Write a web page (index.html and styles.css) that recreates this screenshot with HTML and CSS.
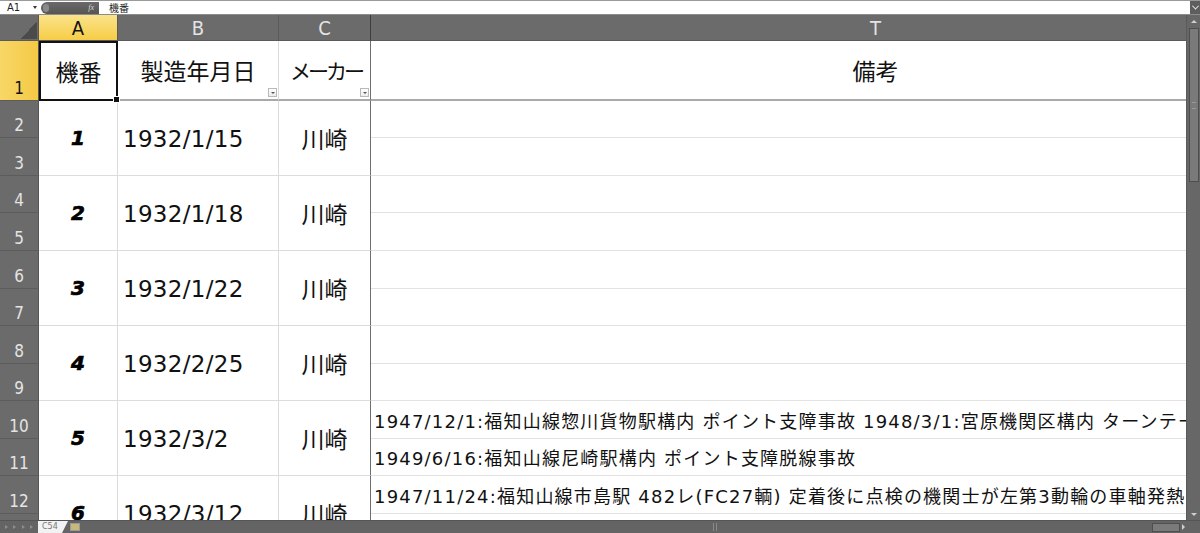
FILE: index.html
```html
<!DOCTYPE html>
<html lang="ja">
<head>
<meta charset="utf-8">
<title>C54</title>
<link rel="stylesheet" href="styles.css">
</head>
<body>
<div class="app">
  <div class="formula-bar">
    <div class="namebox"><span class="name">A1</span><span class="nb-arrow"></span></div>
    <div class="fx-box"><span class="fx-knob"></span><span class="fx">fx</span></div>
    <div class="formula">機番</div>
    <div class="expand"><span></span></div>
  </div>
  <div class="main">
    <div class="sheet">
      <div class="grid">
        <div class="corner"></div>
        <div class="ch sel">A</div>
        <div class="ch">B</div>
        <div class="ch colc">C</div>
        <div class="ch">T</div>

        <div class="rh sel">1</div>
        <div class="c hdr a1">機番</div>
        <div class="c hdr">製造年月日<span class="fbtn"></span></div>
        <div class="c hdr colc maker-h">メーカー<span class="fbtn"></span></div>
        <div class="c hdr">備考</div>

        <div class="rh">2</div>
        <div class="c num span2">1</div>
        <div class="c date span2">1932/1/15</div>
        <div class="c maker colc span2">川崎</div>
        <div class="c note"></div>
        <div class="rh">3</div>
        <div class="c note"></div>

        <div class="rh">4</div>
        <div class="c num span2">2</div>
        <div class="c date span2">1932/1/18</div>
        <div class="c maker colc span2">川崎</div>
        <div class="c note"></div>
        <div class="rh">5</div>
        <div class="c note"></div>

        <div class="rh">6</div>
        <div class="c num span2">3</div>
        <div class="c date span2">1932/1/22</div>
        <div class="c maker colc span2">川崎</div>
        <div class="c note"></div>
        <div class="rh">7</div>
        <div class="c note"></div>

        <div class="rh">8</div>
        <div class="c num span2">4</div>
        <div class="c date span2">1932/2/25</div>
        <div class="c maker colc span2">川崎</div>
        <div class="c note"></div>
        <div class="rh">9</div>
        <div class="c note"></div>

        <div class="rh">10</div>
        <div class="c num span2">5</div>
        <div class="c date span2">1932/3/2</div>
        <div class="c maker colc span2">川崎</div>
        <div class="c note">1947/12/1:福知山線惣川貨物駅構内 ポイント支障事故 1948/3/1:宮原機関区構内 ターンテーブル</div>
        <div class="rh">11</div>
        <div class="c note">1949/6/16:福知山線尼崎駅構内 ポイント支障脱線事故</div>

        <div class="rh">12</div>
        <div class="c num span2">6</div>
        <div class="c date span2">1932/3/12</div>
        <div class="c maker colc span2">川崎</div>
        <div class="c note">1947/11/24:福知山線市島駅 482レ(FC27輌) 定着後に点検の機関士が左第3動輪の車軸発熱</div>
        <div class="rh">13</div>
        <div class="c note"></div>
      </div>
    </div>
    <div class="vscroll">
      <div class="arrow up"></div>
      <div class="vthumb"><span></span></div>
      <div class="vtrack"></div>
      <div class="arrow down"></div>
    </div>
  </div>
  <div class="bottombar">
    <div class="tabnav"><span></span><span></span><span></span><span></span></div>
    <div class="tab">C54</div>
    <div class="newtab"></div>
    <div class="htrack"><span class="split"></span></div>
    <div class="hthumb"></div>
    <div class="harrow"></div>
    <div class="bcorner"></div>
  </div>
</div>
</body>
</html>
```

FILE: styles.css
```css
html, body {
  margin: 0;
  padding: 0;
  overflow: hidden;
  background: #6b6b6b;
  font-family: "DejaVu Sans", "Noto Sans CJK JP", sans-serif;
  color: #111;
}

.app {
  width: 1200px;
  height: 533px;
  display: flex;
  flex-direction: column;
}

/* ---------- formula bar ---------- */
.formula-bar {
  height: 15px;
  box-sizing: border-box;
  border-top: 1px solid #9a9a9a;
  border-bottom: 1px solid #8c8c8c;
  background: #fff;
  display: flex;
  align-items: center;
}
.namebox {
  width: 41px;
  height: 100%;
  box-sizing: border-box;
  padding-left: 7px;
  display: flex;
  align-items: center;
  font-size: 10px;
  color: #222;
}
.name { width: 26px; }
.nb-arrow {
  width: 0;
  height: 0;
  border-left: 2px solid transparent;
  border-right: 2px solid transparent;
  border-top: 3px solid #333;
}
.fx-box {
  width: 58px;
  height: 12px;
  background: linear-gradient(#6a6a6a, #555);
  border-radius: 7px 0 0 7px;
  display: flex;
  align-items: center;
  justify-content: space-between;
  padding: 0 5px 0 2px;
  box-sizing: border-box;
}
.fx-knob {
  width: 6px;
  height: 8px;
  border-radius: 4px;
  background: #8a8a8a;
}
.fx {
  font-family: "Liberation Serif", serif;
  font-style: italic;
  font-size: 8px;
  color: #d8d8d8;
}
.formula {
  flex: 1;
  padding-left: 10px;
  font-size: 10px;
  color: #222;
}
.expand {
  width: 10px;
  height: 100%;
  background: #5e5e5e;
  display: flex;
  align-items: center;
  justify-content: center;
}
.expand span {
  width: 4px;
  height: 4px;
  border-right: 1px solid #eee;
  border-bottom: 1px solid #eee;
  transform: rotate(45deg) translate(-1px, -1px);
}

/* ---------- main area ---------- */
.main {
  flex: 1;
  display: flex;
  min-height: 0;
}
.sheet {
  flex: 1;
  overflow: hidden;
  background: #fff;
}
.grid {
  display: grid;
  grid-template-columns: 39px 79px 161px 92px 1010px;
  grid-template-rows: 26px 60px 37px 38px 37px 38px 38px 37px 38px 37px 38px 37px 38px 37px;
  width: 1381px;
}

.corner {
  background-color: #6b6b6b;
  background-image: linear-gradient(to bottom right, transparent 50%, #4b4b4b 50%);
  background-size: 16px 18px;
  background-position: right 1px bottom 1px;
  background-repeat: no-repeat;
  border-right: 1px solid #5a5a5a;
  border-bottom: 1px solid #5a5a5a;
  box-sizing: border-box;
}

.ch {
  background: #6b6b6b;
  color: #e4e4e4;
  font-family: "DejaVu Sans", sans-serif;
  font-stretch: condensed;
  font-size: 20px;
  display: flex;
  align-items: center;
  justify-content: center;
  box-sizing: border-box;
  border-right: 1px solid #5a5a5a;
  border-bottom: 1px solid #5a5a5a;
}
.ch.colc { border-right: 1px solid #3e3e3e; }
.ch.sel {
  background: linear-gradient(#fbe38a, #f6cd48);
  color: #111;
}

.rh {
  background: #6b6b6b;
  color: #e4e4e4;
  font-family: "DejaVu Sans", sans-serif;
  font-stretch: condensed;
  font-size: 17px;
  line-height: 1;
  display: flex;
  align-items: flex-end;
  justify-content: center;
  padding-bottom: 3px;
  box-sizing: border-box;
  border-right: 1px solid #555;
  border-bottom: 1px solid #5c5c5c;
}
.rh.sel {
  background: linear-gradient(to right, #f8d767, #f4ca45);
  color: #111;
}

/* ---------- cells ---------- */
.c {
  background: #fff;
  box-sizing: border-box;
  border-right: 1px solid #dcdcdc;
  border-bottom: 1px solid #dcdcdc;
  display: flex;
  align-items: center;
  white-space: nowrap;
  overflow: hidden;
}
.c.colc { border-right: 1px solid #6e6e6e; }
.span2 { grid-row: span 2; }

.hdr {
  font-family: "Noto Sans CJK JP", sans-serif;
  font-size: 23px;
  justify-content: center;
  border-bottom: 2px solid #a9a9a9;
  position: relative;
  overflow: visible;
}
.maker-h {
  font-size: 21px;
  letter-spacing: -3px;
  padding-left: 3px;
}
.a1 {
  border: 2px solid #111;
}
.a1::after {
  content: "";
  position: absolute;
  right: -4px;
  bottom: -4px;
  width: 5px;
  height: 5px;
  background: #111;
  border: 1px solid #fff;
  z-index: 3;
}
.fbtn {
  position: absolute;
  right: 1px;
  bottom: 2px;
  width: 9px;
  height: 9px;
  box-sizing: border-box;
  border: 1px solid #b9b9b9;
  background: linear-gradient(#fff, #ececec);
  display: flex;
  align-items: center;
  justify-content: center;
  letter-spacing: 0;
}
.fbtn::after {
  content: "";
  width: 0;
  height: 0;
  border-left: 2px solid transparent;
  border-right: 2px solid transparent;
  border-top: 2px solid #555;
}

.num {
  font-family: "DejaVu Sans", sans-serif;
  font-weight: bold;
  font-style: italic;
  font-size: 20px;
  -webkit-text-stroke: 0.7px #000;
  color: #000;
  justify-content: center;
}
.date {
  font-size: 23px;
  letter-spacing: 0.3px;
  padding-left: 5px;
  padding-top: 2px;
}
.maker {
  font-family: "Noto Sans CJK JP", sans-serif;
  font-size: 23px;
  justify-content: center;
}
.note {
  font-size: 18px;
  letter-spacing: 1.2px;
  padding-left: 3px;
  border-right: none;
  border-bottom-color: #e2e2e2;
}

/* ---------- vertical scrollbar ---------- */
.vscroll {
  width: 14px;
  background: #676767;
  border-left: 1px solid #5a5a5a;
  box-sizing: border-box;
  display: flex;
  flex-direction: column;
  align-items: center;
}
.arrow {
  height: 13px;
  width: 100%;
  display: flex;
  align-items: center;
  justify-content: center;
}
.arrow::after {
  content: "";
  width: 0;
  height: 0;
  border-left: 3px solid transparent;
  border-right: 3px solid transparent;
}
.arrow.up::after { border-bottom: 3px solid #d0d0d0; }
.arrow.down { height: 12px; }
.arrow.down::after { border-top: 3px solid #d0d0d0; }
.vthumb {
  width: 10px;
  height: 154px;
  box-sizing: border-box;
  border: 1px solid #4e4e4e;
  background: #7a7a7a;
  display: flex;
  align-items: center;
  justify-content: center;
}
.vthumb span {
  width: 4px;
  height: 5px;
  border-top: 1px solid #999;
  border-bottom: 1px solid #999;
}
.vtrack { flex: 1; }

/* ---------- bottom bar ---------- */
.bottombar {
  height: 13px;
  background: #646464;
  border-top: 1px solid #555;
  box-sizing: border-box;
  display: flex;
  align-items: center;
}
.tabnav {
  width: 38px;
  display: flex;
  justify-content: space-around;
  padding: 0 2px;
  box-sizing: border-box;
}
.tabnav span {
  width: 0;
  height: 0;
  border-top: 2px solid transparent;
  border-bottom: 2px solid transparent;
  border-left: 3px solid #8e8e8e;
}
.tab {
  height: 12px;
  width: 30px;
  background: #f2f2f2;
  color: #777;
  font-size: 8px;
  line-height: 12px;
  padding-left: 4px;
  box-sizing: border-box;
  clip-path: polygon(0 0, 100% 0, 80% 100%, 0 100%);
  align-self: flex-start;
}
.newtab {
  width: 8px;
  height: 6px;
  margin-left: 2px;
  background: #c8b87a;
  border: 1px solid #999;
}
.htrack {
  flex: 1;
  height: 100%;
  display: flex;
  align-items: center;
  padding-left: 633px;
}
.split {
  width: 2px;
  height: 8px;
  border-left: 1px solid #888;
  border-right: 1px solid #888;
}
.hthumb {
  width: 28px;
  height: 9px;
  box-sizing: border-box;
  border: 1px solid #4e4e4e;
  background: #7a7a7a;
}
.harrow {
  width: 6px;
  display: flex;
  justify-content: center;
}
.harrow::after {
  content: "";
  width: 0;
  height: 0;
  border-top: 3px solid transparent;
  border-bottom: 3px solid transparent;
  border-left: 3px solid #cfcfcf;
}
.bcorner { width: 14px; }
```
